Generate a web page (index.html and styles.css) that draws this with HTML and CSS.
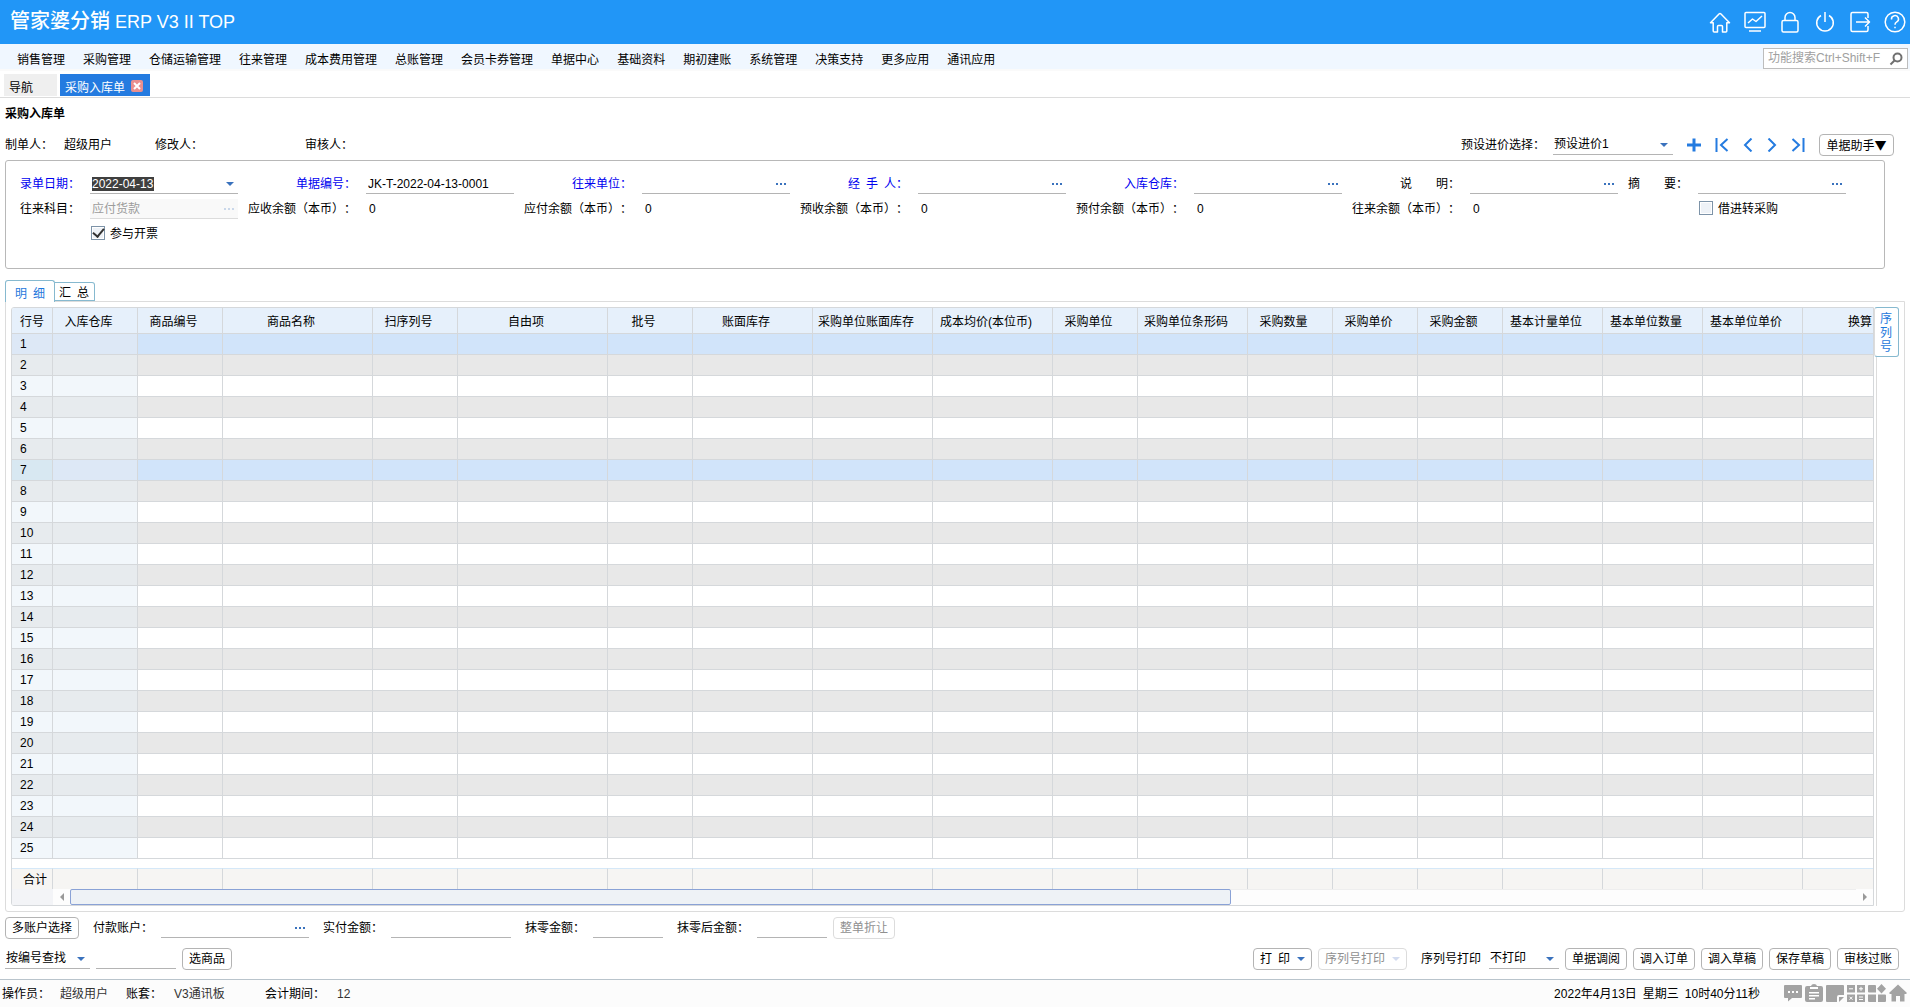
FILE: index.html
```html
<!DOCTYPE html>
<html lang="zh-CN">
<head>
<meta charset="utf-8">
<title>管家婆分销 ERP V3 II TOP</title>
<link rel="stylesheet" href="styles.css">
</head>
<body>
<header class="topbar">
  <h1 class="brand"><span class="brand-cn">管家婆分销</span> ERP V3 II TOP</h1>
  <div class="top-icons">
    <button aria-label="首页"><svg width="22" height="22" viewBox="0 0 22 22"><path d="M1.5 11.8 L10 3 Q11 2 12 3 L20.500 11.800 H17.800 V20 Q17.800 21 16.800 21 H13.500 V15.500 Q13.500 14.500 12.500 14.500 H9.500 Q8.500 14.500 8.500 15.500 V21 H5.200 Q4.200 21 4.200 20 V11.800 Z"/></svg></button>
    <button aria-label="监控"><svg width="22" height="22" viewBox="0 0 22 22"><rect x="1" y="1.500" width="20" height="15" rx="1"/><path d="M4 12 L8.500 8 L12 10.500 L18 5 M5 20 H17"/></svg></button>
    <button aria-label="锁定"><svg width="22" height="22" viewBox="0 0 22 22"><rect x="3" y="9.500" width="16" height="11.500" rx="1.500"/><path d="M6 9.500 V6.500 A5 5 0 0 1 16 6.500 V9.500"/></svg></button>
    <button aria-label="退出"><svg width="22" height="22" viewBox="0 0 22 22"><path d="M11 1 V11 M7 4.500 A8.300 8.300 0 1 0 15 4.500"/></svg></button>
    <button aria-label="切换"><svg width="22" height="22" viewBox="0 0 22 22"><path d="M19 7 V3 Q19 1.500 17.500 1.500 H3.500 Q2 1.500 2 3 V19 Q2 20.500 3.500 20.500 H17.500 Q19 20.500 19 19 V15 M7 11 H20 M16 6.500 L20.500 11 L16 15.500"/></svg></button>
    <button aria-label="帮助"><svg width="22" height="22" viewBox="0 0 22 22"><circle cx="11" cy="11" r="9.800"/><path d="M7.500 8.500 A3.500 3.500 0 1 1 12.500 11.200 Q11 12 11 13.800 M11 15.800 V17.300"/></svg></button>
  </div>
</header>

<nav class="menu">
  <a href="#">销售管理</a><a href="#">采购管理</a><a href="#">仓储运输管理</a><a href="#">往来管理</a><a href="#">成本费用管理</a><a href="#">总账管理</a><a href="#">会员卡券管理</a><a href="#">单据中心</a><a href="#">基础资料</a><a href="#">期初建账</a><a href="#">系统管理</a><a href="#">决策支持</a><a href="#">更多应用</a><a href="#">通讯应用</a>
  <div class="search">
    <input type="text" placeholder="功能搜索Ctrl+Shift+F" aria-label="功能搜索">
    <svg width="14" height="14" viewBox="0 0 14 14"><circle cx="8.500" cy="5.500" r="4"/><path d="M5.500 8.500 L1.500 12.500"/></svg>
  </div>
</nav>

<div class="pagetabs">
  <a class="pagetab" href="#">导航</a>
  <div class="pagetab active"><a href="#">采购入库单</a><button class="close" aria-label="关闭"><svg width="12" height="12" viewBox="0 0 12 12"><path d="M3 3 L9 9 M9 3 L3 9"/></svg></button></div>
</div>

<main>
  <h2 class="doc-title">采购入库单</h2>
  <div class="people">
    <span class="person first">制单人：</span><span class="maker">超级用户</span>
    <span class="editor">修改人：</span><span>审核人：</span>
    <div class="doc-tools">
      <label for="preset">预设进价选择：</label>
      <span class="pick preset"><select id="preset"><option>预设进价1</option></select></span>
      <span class="nav-icons">
        <button aria-label="新增"><svg width="14" height="14" viewBox="0 0 14 14"><path class="heavy" d="M7 0.500 V13.500 M0 7 H14"/></svg></button>
        <button aria-label="首张"><svg width="14" height="14" viewBox="0 0 14 14"><path d="M1.500 0 V14 M12.500 1 L6 7 L12.500 13"/></svg></button>
        <button class="narrow" aria-label="上一张"><svg width="10" height="14" viewBox="0 0 10 14"><path d="M8.500 0.500 L2 7 L8.500 13.500"/></svg></button>
        <button class="narrow" aria-label="下一张"><svg width="10" height="14" viewBox="0 0 10 14"><path d="M1.500 0.500 L8 7 L1.500 13.500"/></svg></button>
        <button aria-label="末张"><svg width="14" height="14" viewBox="0 0 14 14"><path d="M12.500 0 V14 M1.500 1 L8 7 L1.500 13"/></svg></button>
      </span>
      <button class="btn helper">单据助手▼</button>
    </div>
  </div>

  <form class="card">
    <label class="req" for="f1">录单日期：</label>
    <div class="field date"><input id="f1" type="text" value="2022-04-13"></div>
    <label class="req" for="f2">单据编号：</label>
    <div class="field"><input id="f2" type="text" value="JK-T-2022-04-13-0001"></div>
    <label class="req" for="f3">往来单位：</label>
    <div class="field"><input id="f3" type="text"><button type="button" class="more" aria-label="选择"></button></div>
    <label class="req" for="f4">经&ensp;手&ensp;人：</label>
    <div class="field"><input id="f4" type="text"><button type="button" class="more" aria-label="选择"></button></div>
    <label class="req" for="f5">入库仓库：</label>
    <div class="field"><input id="f5" type="text"><button type="button" class="more" aria-label="选择"></button></div>
    <label for="f6">说　　明：</label>
    <div class="field"><input id="f6" type="text"><button type="button" class="more" aria-label="选择"></button></div>
    <label for="f7">摘　　要：</label>
    <div class="field"><input id="f7" type="text"><button type="button" class="more" aria-label="选择"></button></div>

    <label for="f8">往来科目：</label>
    <div class="field off"><input id="f8" type="text" value="应付货款" disabled><button type="button" class="more" aria-label="选择" disabled></button></div>
    <span class="cap">应收余额（本币）：</span><output>0</output>
    <span class="cap">应付余额（本币）：</span><output>0</output>
    <span class="cap">预收余额（本币）：</span><output>0</output>
    <span class="cap">预付余额（本币）：</span><output>0</output>
    <span class="cap">往来余额（本币）：</span><output>0</output>
    <label class="tick last-col"><input type="checkbox">借进转采购</label>
    <label class="tick second-col"><input type="checkbox" checked>参与开票</label>
  </form>

  <div class="subtabs">
    <button class="subtab active">明&ensp;细</button>
    <button class="subtab">汇&ensp;总</button>
  </div>
  <section class="detail">
    <div class="frame">
      <table class="lines">
        <colgroup>
          <col class="w-no"><col class="w-s"><col class="w-s"><col class="w-xl"><col class="w-s"><col class="w-xl"><col class="w-s"><col class="w-l"><col class="w-l"><col class="w-l"><col class="w-s"><col class="w-ml"><col class="w-s"><col class="w-s"><col class="w-s"><col class="w-m"><col class="w-m"><col class="w-m"><col>
        </colgroup>
        <thead>
          <tr><th>行号</th><th>入库仓库</th><th>商品编号</th><th>商品名称</th><th>扫序列号</th><th>自由项</th><th>批号</th><th>账面库存</th><th>采购单位账面库存</th><th>成本均价(本位币)</th><th>采购单位</th><th>采购单位条形码</th><th>采购数量</th><th>采购单价</th><th>采购金额</th><th>基本计量单位</th><th>基本单位数量</th><th>基本单位单价</th><th>换算</th></tr>
        </thead>
        <tbody id="rows"></tbody>
        <tfoot>
          <tr class="spacer"><td colspan="19"></td></tr>
          <tr class="sum"><th>合计</th><td></td><td></td><td></td><td></td><td></td><td></td><td></td><td></td><td></td><td></td><td></td><td></td><td></td><td></td><td></td><td></td><td></td><td></td></tr>
        </tfoot>
      </table>
      <div class="hscroll">
        <span class="corner"></span>
        <span class="arrow left"></span>
        <span class="track"><span class="thumb"></span></span>
        <span class="arrow right"></span>
      </div>
    </div>
    <aside class="side"><button class="sidetab">序列号</button><span class="sideline"></span></aside>
  </section>

  <div class="actions pay">
    <button class="btn wide">多账户选择</button>
    <label for="p1">付款账户：</label><div class="field account"><input id="p1" type="text"><button class="more" aria-label="选择"></button></div>
    <label for="p2">实付金额：</label><div class="field paid"><input id="p2" type="text"></div>
    <label for="p3">抹零金额：</label><div class="field small"><input id="p3" type="text"></div>
    <label for="p4">抹零后金额：</label><div class="field small"><input id="p4" type="text"></div>
    <button class="btn" disabled>整单折让</button>
  </div>
  <div class="actions find">
    <span class="pick by"><select aria-label="查找方式"><option>按编号查找</option></select></span>
    <div class="field key"><input type="text" aria-label="查找内容"></div>
    <button class="btn goods">选商品</button>
    <div class="right">
      <button class="btn drop">打&ensp;印</button>
      <button class="btn drop" disabled>序列号打印</button>
      <label for="sn">序列号打印</label>
      <span class="pick sn"><select id="sn"><option>不打印</option></select></span>
      <button class="btn">单据调阅</button>
      <button class="btn">调入订单</button>
      <button class="btn">调入草稿</button>
      <button class="btn">保存草稿</button>
      <button class="btn">审核过账</button>
    </div>
  </div>
</main>

<footer class="status">
  <span class="operator">操作员：</span><span class="user">超级用户</span>
  <span class="book">账套：</span><span class="bookname">V3通讯板</span>
  <span class="period">会计期间：</span><span class="num">12</span>
  <span class="clock"><span>2022年4月13日</span><span>星期三</span><span>10时40分11秒</span></span>
  <span class="tray">
    <svg width="18" height="18" viewBox="0 0 18 18"><path d="M1 1 H17 Q18 1 18 2 V13 Q18 14 17 14 H8 L4 17.500 V14 H1 Q0 14 0 13 V2 Q0 1 1 1 Z"/><path class="cut" d="M4 7 H6 V9 H4 Z M8 7 H10 V9 H8 Z M12 7 H14 V9 H12 Z"/></svg>
    <svg width="18" height="18" viewBox="0 0 18 18"><path d="M2 2 H6 Q6.500 0 9 0 Q11.500 0 12 2 H16 Q18 2 18 4 V16 Q18 18 16 18 H2 Q0 18 0 16 V4 Q0 2 2 2 Z"/><path class="cut" d="M5 3 H13 V5 H5 Z M4 8 H14 V9.500 H4 Z M4 11 H14 V12.500 H4 Z M4 14 H10 V15.500 H4 Z"/></svg>
    <svg width="18" height="18" viewBox="0 0 18 18"><path d="M1 1 H17 Q18 1 18 2 V11 H13 Q11 11 11 13 V18 H1 Q0 18 0 17 V2 Q0 1 1 1 Z M13 13 H18 L13 18 Z"/></svg>
    <svg width="18" height="18" viewBox="0 0 18 18"><path d="M0 1 H8 V8.500 H0 Z M10 1 H18 V8.500 H10 Z M0 10.500 H8 V18 H0 Z M10 10.500 H18 V18 H10 Z"/><path class="cutline" d="M2 4.800 H6 M12 4.800 H16 M14 2.800 V6.800 M2.500 12.700 L5.500 15.700 M5.500 12.700 L2.500 15.700 M12 13 H16 M12 15.500 H16"/></svg>
    <svg width="18" height="18" viewBox="0 0 18 18"><path d="M1 1 H7 Q8 1 8 2 V8.500 H1 Q0 8.500 0 7.500 V2 Q0 1 1 1 Z M13.500 0 L18 4.700 L13.500 9.400 L9 4.700 Z M0 10.500 H8 V18 H1 Q0 18 0 17 Z M10 10.500 H17 Q18 10.500 18 11.500 V17 Q18 18 17 18 H10 Z"/></svg>
    <svg width="18" height="18" viewBox="0 0 18 18"><path d="M9 0.500 L18 9 L17 10 H15.500 V17.500 H11 V12 H7 V17.500 H2.500 V10 H1 L0 9 Z"/></svg>
  </span>
</footer>
<script src="rows.js"></script>
</body>
</html>
```
FILE: rows.js
```js
// Fills the document grid with its 25 empty entry lines.
const body = document.getElementById('rows');
for (let n = 1; n <= 25; n++) {
  const tr = document.createElement('tr');
  if (n === 1 || n === 7) tr.className = 'picked';
  if (n === 7) tr.classList.add('current');
  const th = document.createElement('th');
  th.textContent = n;
  tr.append(th);
  for (let c = 0; c < 18; c++) tr.append(document.createElement('td'));
  body.append(tr);
}
```
FILE: styles.css
```css
* { box-sizing: border-box; }
body {
  margin: 0;
  background: #fff;
  color: #000;
  font: 12px/16px "Liberation Sans", "Noto Sans CJK SC", sans-serif;
  text-spacing-trim: space-all;
  white-space: nowrap;
}
a { color: inherit; text-decoration: none; }
button, input, select { font: inherit; color: inherit; margin: 0; padding: 0; border: 0; background: none; border-radius: 0; }
input, select { outline: 0; min-width: 0; }
button { display: inline-flex; align-items: center; justify-content: center; }
svg { display: block; fill: none; }

.topbar { display: flex; align-items: center; justify-content: space-between; height: 44px; padding: 0 4px 0 10px; background: #2196f7; color: #fff; }
.brand { margin: 0 0 2px; font-size: 18px; line-height: 24px; font-weight: 400; }
.brand-cn { font-size: 20px; font-weight: 500; }
.top-icons { display: flex; gap: 13px; }
.top-icons svg { stroke: #fff; stroke-width: 1.5; stroke-linejoin: round; }

.menu { display: flex; align-items: center; gap: 18px; height: 25px; padding: 0 2px 0 17px; background: #f0f7ff; }
.menu > a { padding-top: 6px; }
.search { display: flex; align-items: center; width: 145px; height: 21px; margin: 4px 0 0 auto; padding: 0 4px; border: 1px solid #bdbdbd; background: #fff; }
.search input { flex: 1; padding-bottom: 2px; }
.search input::placeholder { color: #a0a0a0; opacity: 1; }
.search svg { stroke: #707070; stroke-width: 2; }

.pagetabs { display: flex; gap: 3px; height: 29px; padding: 3px 4px 1px; border-top: 2px solid #fafafa; border-bottom: 1px solid #dcdcdc; }
.pagetab { display: flex; align-items: center; gap: 6px; min-width: 53px; padding: 6px 7px 0 5px; background: #efefef; }
.pagetab.active { background: #247be0; color: #fff; }
.close { width: 12px; height: 12px; margin-bottom: 5px; border-radius: 2px; background: #e98f8f; }
.close svg { stroke: #fff; stroke-width: 2; }

.doc-title { margin: 0; padding: 1px 0 0 5px; font-size: 12px; line-height: 31px; }
.people { display: flex; align-items: center; height: 30px; padding: 0 16px 0 5px; }
.first { width: 59px; }
.maker { width: 91px; }
.editor { width: 150px; }
.doc-tools { display: flex; align-items: center; margin-left: auto; }
.doc-tools label { margin-right: 8px; }

.pick { position: relative; display: block; height: 20px; border-bottom: 1px solid #b4b4b4; }
.pick select { appearance: none; width: 100%; height: 18px; padding-left: 1px; }
.pick::after, .date::after, .drop::after { content: ""; border: 4px solid transparent; border-top-color: #3a72bd; border-bottom: 0; }
.pick::after { position: absolute; right: 5px; top: 8px; pointer-events: none; }
.preset { width: 120px; }
.nav-icons { display: flex; gap: 14px; margin: 0 14px; }
.nav-icons svg { stroke: #247be0; stroke-width: 2; }
.nav-icons .heavy { stroke-width: 3; }

.btn { height: 22px; padding: 0 6px; border: 1px solid #b4b4b4; border-radius: 4px; background: #fff; }
.btn:disabled { border-color: #dcdcdc; color: #8f8f8f; }
.helper { width: 75px; font-family: "Noto Sans CJK SC", sans-serif; }
.drop { gap: 7px; }
.drop:disabled::after { border-top-color: #d3dcf0; }

.card {
  display: grid;
  grid-template-columns: 70px 148fr 128px 148fr 128px 148fr 128px 148fr 128px 148fr 128px 148fr 80px 148fr;
  grid-auto-rows: 20px;
  row-gap: 5px;
  align-items: center;
  height: 109px;
  margin: 0 25px 0 5px;
  padding: 13px 38px 0 14px;
  align-content: start;
  border: 1px solid #b8b8b8;
  border-radius: 3px;
}
.card > label, .cap { padding-right: 10px; text-align: right; }
.card .req { color: #0000f0; }
.card output { padding-left: 3px; }
.card .tick { display: flex; align-items: center; gap: 5px; padding: 0; }
.last-col { grid-column: 14; }
.second-col { grid-column: 2; }
.tick input { appearance: none; display: flex; align-items: center; justify-content: center; width: 14px; height: 14px; margin: 0 0 3px 1px; border: 1px solid #7d93a8; background: #eef2f7; box-shadow: inset 0 0 0 1px #fff; }
.tick input:checked::after { content: ""; width: 5px; height: 9px; margin-bottom: 2px; border: solid #333; border-width: 0 2px 2px 0; transform: rotate(40deg); }

.field { display: flex; align-items: center; height: 20px; padding: 0 4px 0 2px; border-bottom: 1px solid #b4b4b4; }
.field input { flex: 1; width: 0; height: 16px; }
.date input { background: linear-gradient(#3f3f3f, #3f3f3f) left / 62px 14px no-repeat; color: #fff; }
.more { width: 10px; height: 2px; background: repeating-linear-gradient(90deg, #3a72bd 0 2px, transparent 2px 4px); }
.off { border-color: #dcdcdc; background: #f9f9f9; color: #9c9c9c; }
.off .more { opacity: 0.25; }

.subtabs { display: flex; align-items: flex-end; margin: 11px 5px 0; }
.subtab { height: 19px; padding: 3px 5px 0 4px; border: 1px solid #86b9cf; border-left: 0; border-radius: 0 3px 0 0; background: #fff; }
.subtab.active { position: relative; height: 22px; margin-bottom: -1px; padding: 5px 9px 0; border: 1px solid #86b9cf; border-bottom: 0; border-radius: 3px 3px 0 0; color: #1e78dc; }

.detail { display: flex; margin: 0 5px; padding: 5px; border: 1px solid #dcdcdc; border-radius: 0 0 3px 3px; }
.frame { flex: 1; min-width: 0; overflow: hidden; border: 1px solid #d5d8db; border-radius: 3px 0 0 3px; }
.lines { width: 100%; table-layout: fixed; border-spacing: 0; }
.w-no { width: 41px; }
.w-s { width: 85px; }
.w-m { width: 100px; }
.w-ml { width: 110px; }
.w-l { width: 120px; }
.w-xl { width: 150px; }
.lines th, .lines td { padding: 0; border: solid #d5d8db; border-width: 0 1px 1px 0; font-weight: 400; }
.lines tr > :last-child { border-right: 0; }
.lines thead th { height: 26px; padding: 3px 13px 0 0; background: #e6f0fb; }
.lines thead th:first-child { padding-right: 0; }
.lines thead th:last-child { padding-right: 1px; text-align: right; }
.lines tbody th, .lines tbody td { height: 21px; }
.lines tbody th { padding-left: 8px; text-align: left; line-height: 20px; }
.lines tbody tr > :nth-child(-n+2) { background: #f2f7fb; }
.lines tbody tr:nth-child(even) > * { background: #e8e8e8; }
.lines tbody tr:nth-child(even) > :nth-child(-n+2) { background: #e7ebee; }
.lines tbody .picked > * { background: #d1e4fa; }
.lines tbody .picked > :nth-child(-n+2) { background: #dde8f6; }
.lines tbody .current > th:first-child { background: #d8e8f2; }
.lines .spacer td { height: 9px; border: 0; }
.lines .sum > * { height: 21px; border-width: 1px 1px 0 0; border-top-color: #d5e8f8; background: #f6f5f3; }
.lines .sum th { padding: 1px 0 0 6px; }

.hscroll { display: flex; height: 16px; background: #fdfdfd; }
.corner { width: 41px; background: #f3f4f7; }
.arrow { display: flex; align-items: center; justify-content: center; width: 17px; }
.arrow::before { content: ""; border: 4px solid transparent; }
.arrow.left::before { border-left: 0; border-right-color: #999; }
.arrow.right::before { border-right: 0; border-left-color: #999; }
.track { display: flex; flex: 1; border-top: 1px solid #eee; }
.thumb { width: 65%; margin-top: -1px; border: 1px solid #8aa2d6; border-radius: 2px; background: #eef2f6; }

.side { display: flex; flex-direction: column; width: 25px; }
.sidetab { width: 25px; height: 50px; padding: 2px 6px 0 5px; border: 1px solid #86b9cf; border-left-color: #dcdcdc; border-radius: 3px; color: #1e78dc; line-height: 14px; white-space: normal; }
.sideline { flex: 1; margin-left: 2px; border-left: 1px solid #dcdcdc; }

.actions { display: flex; align-items: center; height: 22px; margin: 0 11px 0 5px; }
.pay { margin-top: 5px; }
.find { margin-top: 9px; }
.pay label { margin: 0 8px 0 14px; }
.account { width: 148px; }
.paid { width: 120px; }
.small { width: 70px; }
.small + .btn { margin-left: 6px; }
.wide { width: 74px; }
.by { width: 85px; }
.key { width: 80px; margin: 0 6px; }
.goods { width: 50px; }
.right { display: flex; align-items: center; gap: 6px; margin-left: auto; }
.right label { margin: 0 2px 0 8px; }
.sn { width: 70px; }

.status { display: flex; align-items: center; height: 28px; margin-top: 9px; padding: 0 3px 0 2px; border-top: 1px solid #b9c4cc; background: #fcfcfc; }
.operator { width: 58px; }
.user { width: 66px; color: #333; }
.book { width: 48px; }
.bookname { width: 91px; color: #333; }
.period { width: 72px; }
.num { color: #333; }
.clock { display: flex; gap: 6px; margin-left: auto; }
.tray { display: flex; gap: 3px; margin: 0 0 1px 24px; }
.tray svg { fill: #a3a3a3; }
.tray .cut { fill: #fff; }
.tray .cutline { stroke: #fff; stroke-width: 1; }
```
